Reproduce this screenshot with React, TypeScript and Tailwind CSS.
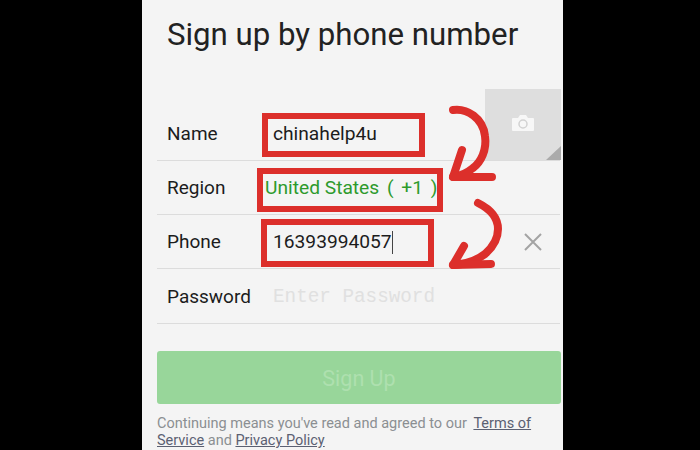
const sans = "font-['Roboto','Liberation_Sans',sans-serif]";

function Row({ label, children }: { label: string; children: React.ReactNode }) {
    return (
        <div className="flex h-[54px] items-center border-b border-[#dcdcdc] pl-[10px] pt-px">
            <span className="w-[106px] shrink-0 text-[19px] leading-[28px] text-[#1c1c1c]">{label}</span>
            {children}
        </div>
    );
}

function Annotation({ className }: { className: string }) {
    return <div className={`absolute border-[6px] border-[#dc2f2b] ${className}`} />;
}

export default function App() {
    return (
        <div className={`flex h-[450px] w-[700px] overflow-hidden bg-black ${sans}`}>
            <div className="relative ml-[142px] h-[450px] w-[421px] bg-[#f4f4f4]">
                <h1 className="pl-[25px] pt-[15px] text-[31.2px] leading-[40px] text-[#222222]">
                    Sign up by phone number
                </h1>

                {/* Form */}
                <div className="ml-[15px] mt-[52px] w-[403px]">
                    <Row label="Name">
                        <span className="relative text-[19.2px] leading-[28px] text-[#1c1c1c]">
                            chinahelp4u
                            <Annotation className="left-[-11px] top-[-7px] h-[44px] w-[163px]" />
                        </span>
                    </Row>
                    <Row label="Region">
                        <span className="relative -ml-[8px] whitespace-pre text-[19.2px] leading-[28px] text-[#2d9a2c]">
                            United States<span className="[word-spacing:3px]"> ( +1 )</span>
                            <Annotation className="left-[-8px] top-[-6px] h-[44px] w-[186px]" />
                        </span>
                    </Row>
                    <Row label="Phone">
                        <span className="relative flex items-center text-[19.2px] leading-[28px] text-[#1c1c1c]">
                            16393994057
                            <span className="h-[23px] w-px bg-[#444444]" />
                            <Annotation className="left-[-12px] top-[-9px] h-[48px] w-[173px]" />
                        </span>
                    </Row>
                    <div className="flex h-[55px] items-center border-b border-[#dcdcdc] pl-[10px] pt-px">
                        <span className="w-[106px] shrink-0 text-[19px] leading-[28px] text-[#1c1c1c]">Password</span>
                        <span className="whitespace-pre font-['Liberation_Mono',monospace] text-[19.3px] leading-[28px] text-[#e0e0e0]">
                            Enter Password
                        </span>
                    </div>
                </div>

                <button className="ml-[15px] mt-[27px] flex h-[53px] w-[404px] items-center justify-center rounded-[3px] bg-[#98d69a] pt-[3px] text-[21.5px] text-[#aee0af]">
                    Sign Up
                </button>

                <div className="ml-[15px] mt-[11px] w-[400px] text-[14.5px] leading-[17px] text-[#8b8f92]">
                    <div>
                        Continuing means you've read and agreed to our{" "}
                        <span className="ml-[3px] text-[#5b6072] underline">Terms of</span>
                    </div>
                    <div>
                        <span className="text-[#5b6072] underline">Service</span> and{" "}
                        <span className="text-[#5b6072] underline">Privacy Policy</span>
                    </div>
                </div>

                {/* Avatar placeholder */}
                <div className="absolute left-[343px] top-[89px] flex h-[71px] w-[76px] items-center justify-center bg-[#dedede]">
                    <svg width="22" height="16" viewBox="0 0 22 16" className="-mt-[3px]">
                        <path d="M1 3h5l2-3h6l2 3h5a1 1 0 0 1 1 1v11a1 1 0 0 1-1 1H1a1 1 0 0 1-1-1V4a1 1 0 0 1 1-1z" fill="#f7f7f7" />
                        <circle cx="11" cy="9" r="4" fill="none" stroke="#d2d2d2" strokeWidth="1.5" />
                    </svg>
                    <svg width="15" height="14" viewBox="0 0 15 14" className="absolute bottom-0 right-0">
                        <path d="M15 0v14H0z" fill="#ababab" />
                    </svg>
                </div>

                {/* Clear icon */}
                <svg width="20" height="20" viewBox="0 0 20 20" className="absolute left-[381px] top-[232px]">
                    <path d="M2 2l16 16M18 2L2 18" stroke="#a3a3a3" strokeWidth="2" fill="none" />
                </svg>

                {/* Hand-drawn arrows */}
                <svg width="110" height="190" viewBox="0 0 110 190" className="absolute left-[300px] top-[100px]">
                    <g fill="none" stroke="#dc2f2b" strokeWidth="8" strokeLinecap="round" strokeLinejoin="round">
                        <path d="M11 10c14-2 30 8 32 26 2 14-4 26-12 32-6 5-13 8-20 9" />
                        <path d="M20 50L11 77l39 0" />
                        <path d="M36 103c12 6 20 14 20 26 0 10-5 18-13 25-9 7-20 10-32 11" />
                        <path d="M22 146l-11 19 38-1" />
                    </g>
                </svg>
            </div>
        </div>
    );
}
